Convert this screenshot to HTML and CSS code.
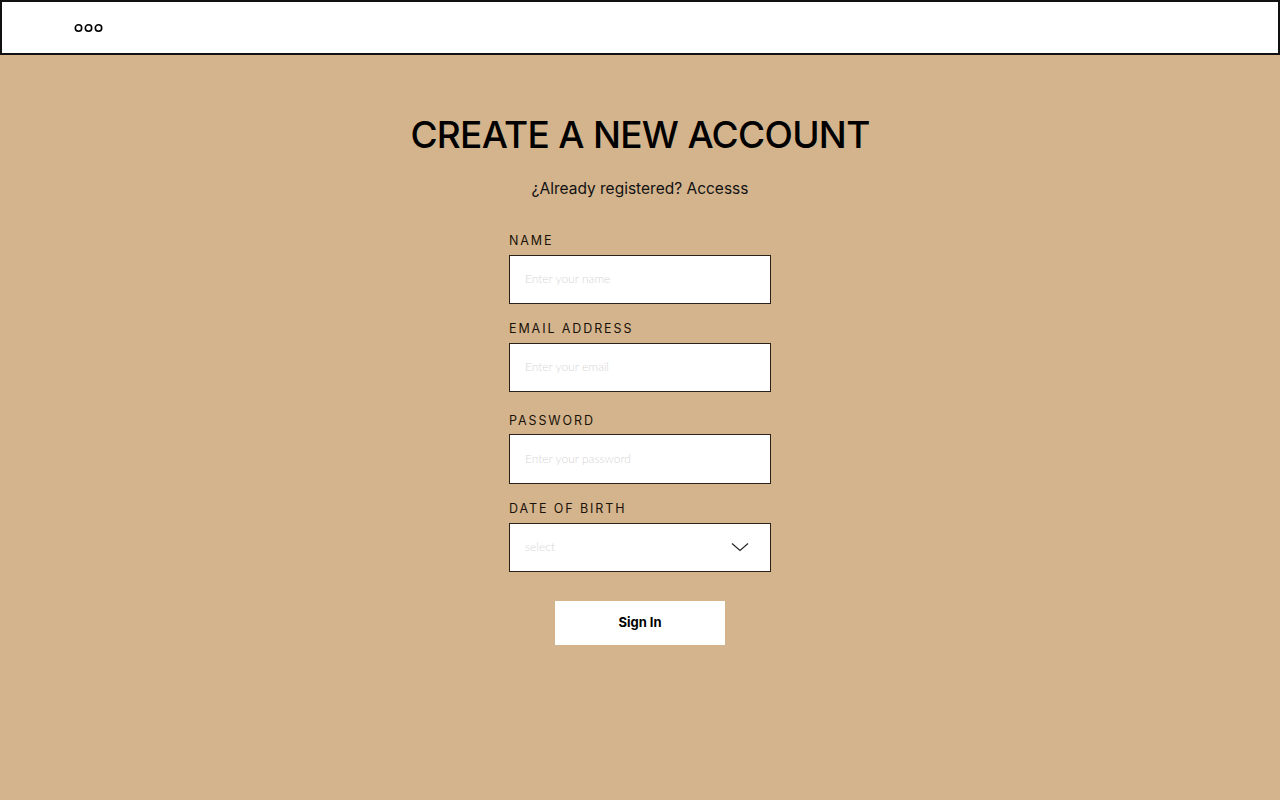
FILE: index.html
```html
<!DOCTYPE html>
<html lang="en">
<head>
<meta charset="utf-8">
<title>Create a new account</title>
<link rel="stylesheet" href="styles.css">
</head>
<body>
<header class="topbar">
  <svg class="dots" width="30" height="10" viewBox="0 0 30 10" aria-hidden="true">
    <circle cx="4.5" cy="5" r="3.2" fill="none" stroke="#000" stroke-width="1.6"/>
    <circle cx="14.5" cy="5" r="3.2" fill="none" stroke="#000" stroke-width="1.6"/>
    <circle cx="24.5" cy="5" r="3.2" fill="none" stroke="#000" stroke-width="1.6"/>
  </svg>
</header>
<main class="main">
  <h1 class="title">CREATE A NEW ACCOUNT</h1>
  <p class="subtitle">¿Already registered? Accesss</p>
  <form class="form">
    <div class="field">
      <label class="label">NAME</label>
      <div class="box"><span class="ph">Enter your name</span></div>
    </div>
    <div class="field">
      <label class="label">EMAIL ADDRESS</label>
      <div class="box"><span class="ph">Enter your email</span></div>
    </div>
    <div class="field field-wide">
      <label class="label">PASSWORD</label>
      <div class="box box-tall"><span class="ph">Enter your password</span></div>
    </div>
    <div class="field">
      <label class="label">DATE OF BIRTH</label>
      <div class="box select"><span class="ph">select</span>
        <svg class="chev" width="18" height="10" viewBox="0 0 18 10" aria-hidden="true">
          <path d="M1 1.5 L9 8.5 L17 1.5" fill="none" stroke="#222" stroke-width="1.1"/>
        </svg>
      </div>
    </div>
    <button type="button" class="btn">Sign In</button>
  </form>
</main>
</body>
</html>
```
FILE: styles.css
```css
* { box-sizing: border-box; }
html, body { margin: 0; padding: 0; }
body {
  background: #d3b48d;
  font-family: "Inter", "Liberation Sans", sans-serif;
  color: #000;
  height: 800px;
}
.topbar {
  height: 55px;
  background: #fff;
  border: 2px solid #111;
  display: flex;
  align-items: center;
  padding-left: 72px;
}
.dots { display: block; }
.main {
  display: flex;
  flex-direction: column;
  align-items: center;
}
.title {
  margin: 57px 0 0;
  font-family: "Inter", "Liberation Sans", sans-serif;
  font-weight: 500;
  font-size: 37px;
  line-height: 46px;
  letter-spacing: -0.7px;
}
.subtitle {
  margin: 21px 0 0;
  font-family: "Inter", "Liberation Sans", sans-serif;
  font-size: 15.5px;
  line-height: 20px;
  color: #111;
}
.form {
  margin-top: 34px;
  width: 262px;
  display: flex;
  flex-direction: column;
}
.field {
  display: flex;
  flex-direction: column;
  gap: 6px;
  margin-bottom: 17px;
}
.field-wide { margin-top: 4px; gap: 5px; }
.label {
  font-family: "Inter", "Liberation Sans", sans-serif;
  font-size: 12.5px;
  line-height: 16px;
  letter-spacing: 1.9px;
  color: #1a1208;
}
.box {
  height: 49px;
  background: #fff;
  border: 1px solid #2b2118;
  display: flex;
  align-items: center;
  padding: 0 15px 2px;
}
.box-tall { height: 50px; }
.ph {
  font-family: "Lato", "Liberation Sans", sans-serif;
  font-size: 12px;
  color: #d6d6d6;
  font-weight: 300;
}
.select { justify-content: space-between; padding-right: 21px; }
.chev { display: block; }
.btn {
  align-self: center;
  margin-top: 12px;
  width: 170px;
  height: 44px;
  padding: 0 0 3px;
  background: #fff;
  border: none;
  font-family: "Inter", "Liberation Sans", sans-serif;
  font-weight: 700;
  font-size: 13px;
  color: #000;
  cursor: pointer;
}
```
